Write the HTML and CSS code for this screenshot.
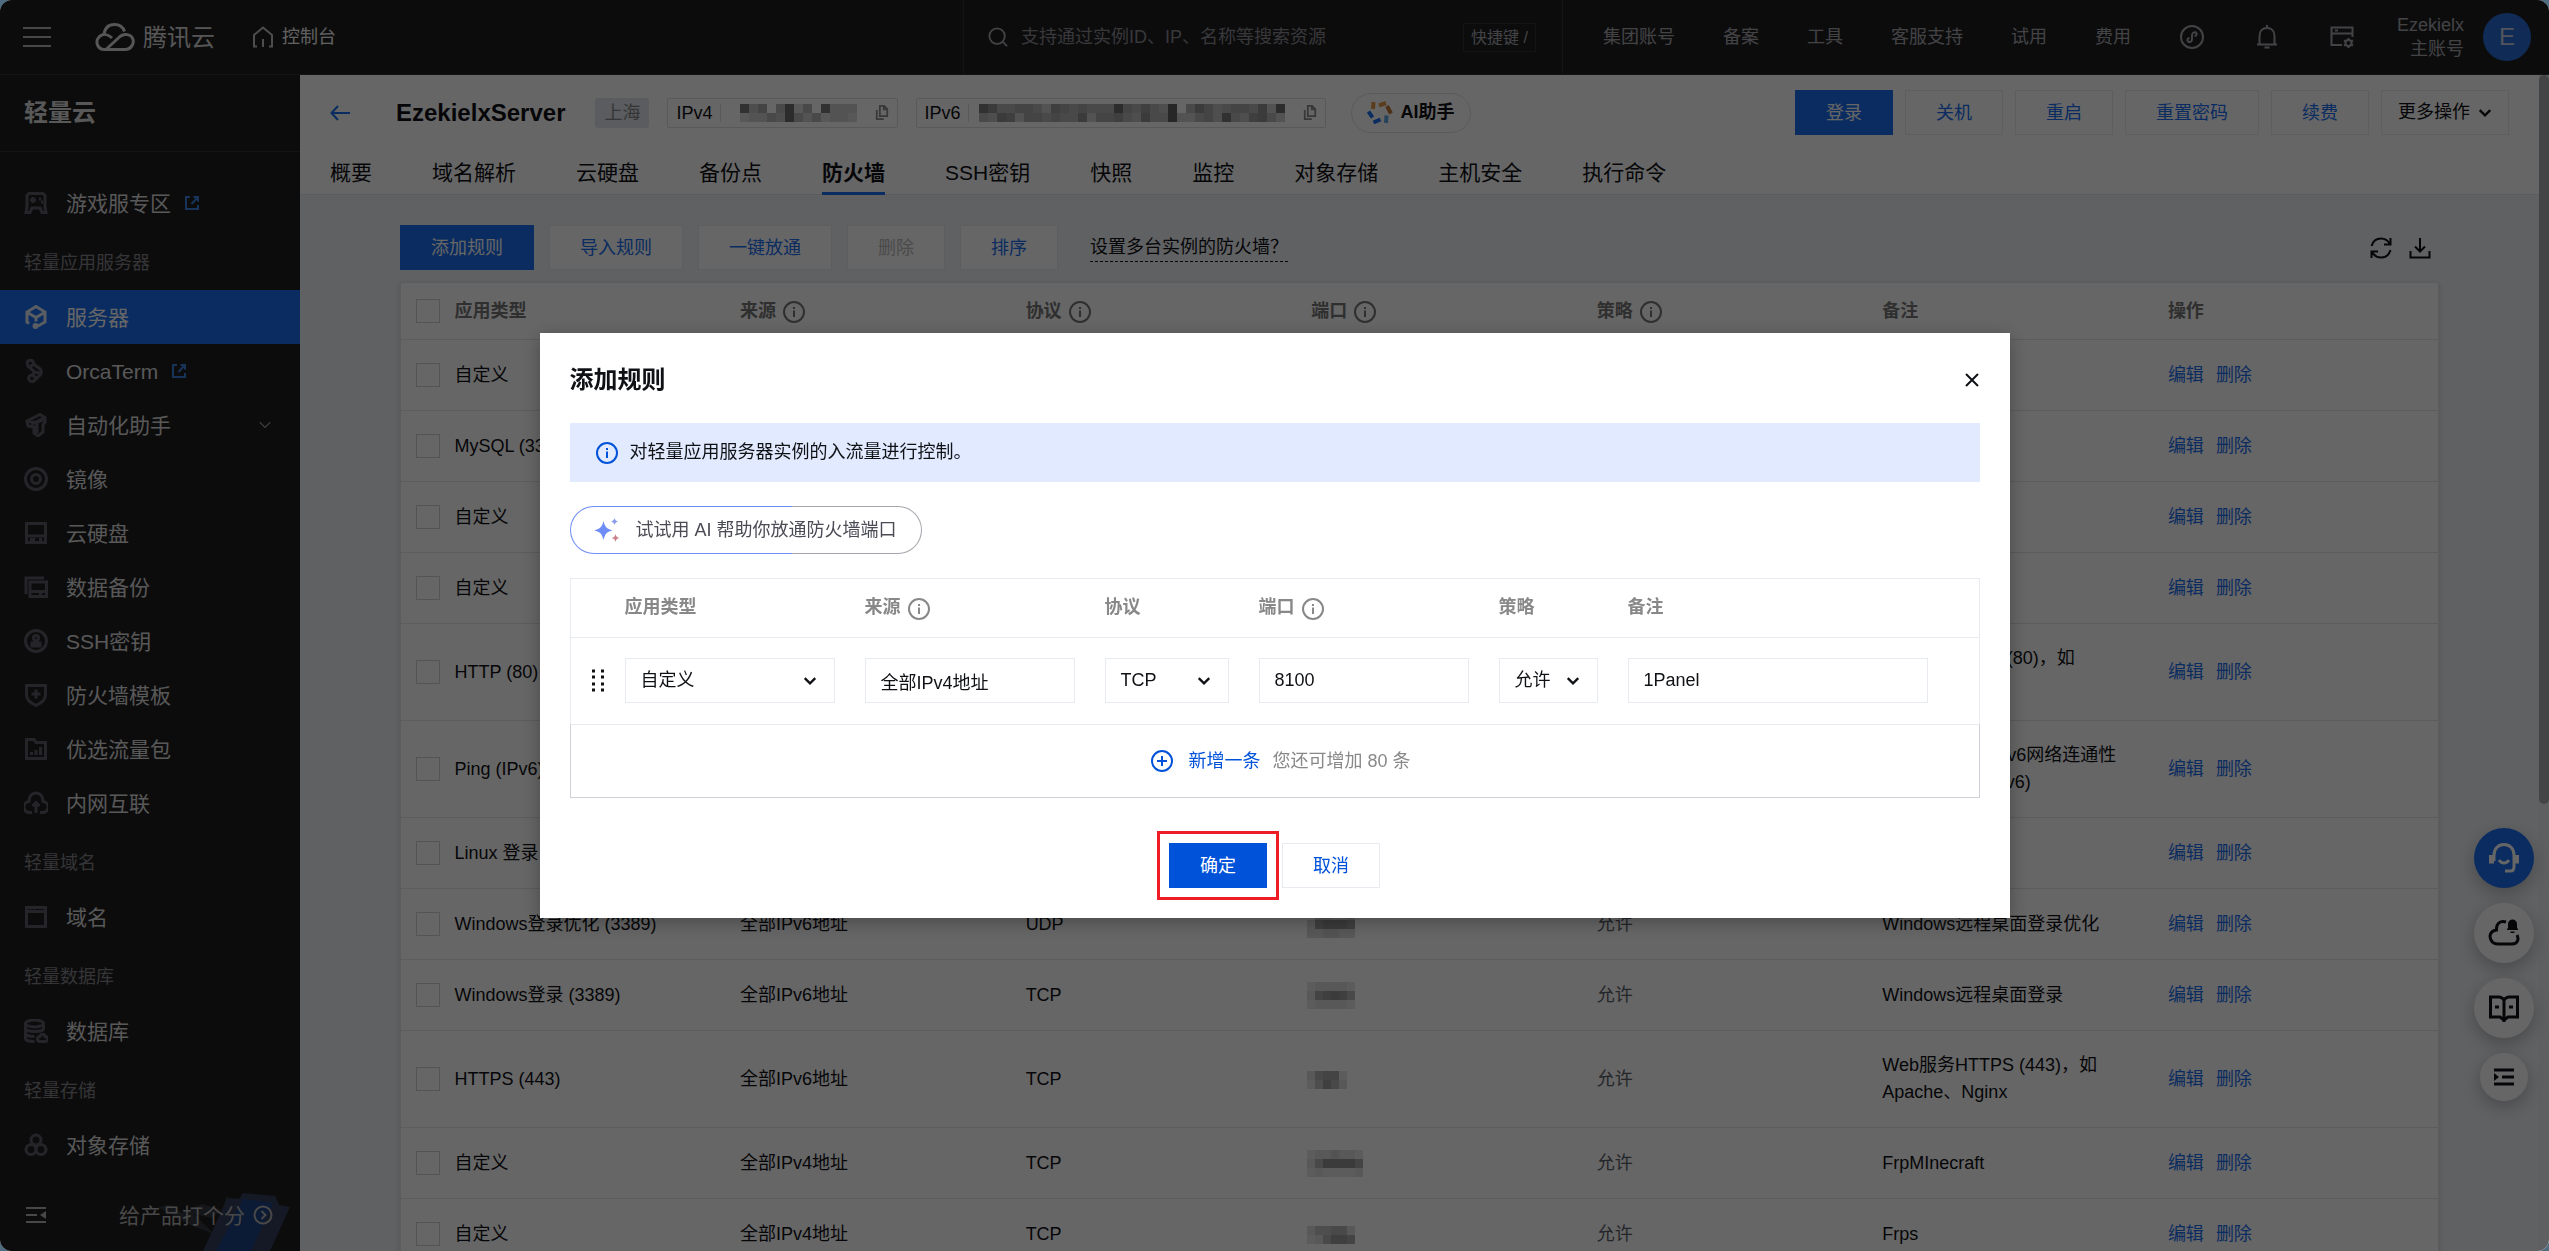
FILE: index.html
```html
<!DOCTYPE html>
<html lang="zh-CN">
<head>
    <meta charset="UTF-8">
    <meta name="viewport" content="width=device-width, initial-scale=1.0">
    <title>EzekielxServer - 轻量云 - 控制台</title>
    <link rel="stylesheet" href="styles.css">
</head>
<body>
<svg class="sprite" aria-hidden="true">
    <symbol id="info" viewBox="0 0 24 24"><circle cx="12" cy="12" r="10"/><path d="M12 10.500v6.500M12 7v2"/></symbol>
    <symbol id="chevron" viewBox="0 0 12 12"><path d="M1.500 3.500 6 8l4.500-4.500"/></symbol>
    <symbol id="copy" viewBox="0 0 16 18"><path d="M5.500 1.500h5l3.500 3.500v8H5.500zM10 1.500V5.500h4M2 6v10.500h8"/></symbol>
    <symbol id="external" viewBox="0 0 16 16"><path d="M6 2H2v12h12v-4M9.500 2H14v4.500M14 2 7.500 9"/></symbol>
</svg>
<div class="app">
    <header class="topbar">
        <button class="menu-btn" aria-label="菜单"><svg viewBox="0 0 28 22"><path d="M0 2h28M0 11h28M0 20h28"/></svg></button>
        <a class="logo" href="#">
            <svg viewBox="0 0 40 30"><path d="M9 12.500C10 5 14 2.500 19.500 2.500c4.500 0 8.500 2.500 10 7M17 16c-4-4-9-4.500-12.500-1.500-5 5-2 13 5 13H30c7 0 9-7 8-10-1.500-5.500-9-6.500-13-3L11.500 27"/></svg>
            腾讯云
        </a>
        <a class="console" href="#">
            <svg viewBox="0 0 22 22"><path d="M5 20.500H2V9l9-7.500L20 9v11.500h-3M11 13v8"/></svg>
            控制台
        </a>
        <div class="search">
            <svg viewBox="0 0 22 22"><circle cx="10" cy="10" r="8.500"/><path d="m16 16 5 5"/></svg>
            <input type="text" aria-label="搜索" placeholder="支持通过实例ID、IP、名称等搜索资源">
            <kbd>快捷键 /</kbd>
        </div>
        <nav class="topnav">
            <a href="#">集团账号</a>
            <a href="#">备案</a>
            <a href="#">工具</a>
            <a href="#">客服支持</a>
            <a href="#">试用</a>
            <a href="#">费用</a>
        </nav>
        <div class="tools">
            <button aria-label="小程序"><svg viewBox="0 0 24 24"><circle cx="12" cy="12" r="11"/><path d="M8 16.500c3 1.500 4-.5 4-3v-3c0-2.500 2-4 4-3 1.500 1 .5 3.500-1.500 3.500M8 16.500c-1.500-1.500 0-3.500 1.500-3.500"/></svg></button>
            <button aria-label="消息"><svg viewBox="0 0 24 24"><path d="M12 0v3M2 19.500h20M4.500 19V11C4.500 6 7.500 3 12 3s7.500 3 7.500 8v8M9.500 22.500h5"/></svg></button>
            <button aria-label="设置"><svg viewBox="0 0 24 24"><path d="M12 20H1.500V2.500h21V12M1.500 8.500h21M5 5.500h3"/><circle cx="18.500" cy="18" r="3"/><path d="M18.500 13v2M18.500 21v2M14 15.500l2 1M21 19.500l2 1M14 20.500l2-1M21 16.500l2-1"/></svg></button>
        </div>
        <div class="account">
            <div>Ezekielx<br>主账号</div>
            <span class="avatar">E</span>
        </div>
    </header>

    <aside class="sidebar">
        <h2>轻量云</h2>
        <nav class="menu">
            <a href="#"><svg viewBox="0 0 24 24"><path d="M5 2.500h14l2 2V16l1 5.500h-4L16 17H8l-2 4.500H2L3 16V4.500zM9 6v6M6 9h6M15 8h2M17 11h2"/></svg>游戏服专区<svg class="ext"><use href="#external"/></svg></a>
            <h3>轻量应用服务器</h3>
            <a class="active" href="#"><svg viewBox="0 0 24 24"><path d="M5 18.500 3 17V7l9-5.500L21 7v10l-7 4M3.500 7.500 12 12.500l8.500-5M12 12.500v4"/><circle cx="11.500" cy="21" r="1.500"/></svg>服务器</a>
            <a href="#"><svg viewBox="0 0 24 24"><path d="M5 1.500c3-1 5 1 4.500 3.500l6 4.500c2.500 2 2.500 5 0 7l-5 5c-3 2.500-7-.5-5.500-3.500.5-1.500 2-2 3.500-2l2-3-5-4.500c-3-2-3-6-.5-7zM10.500 13l5 1M8.500 16l4 3M9.500 5 5.500 8.500"/></svg>OrcaTerm<svg class="ext"><use href="#external"/></svg></a>
            <a href="#"><svg viewBox="0 0 24 24"><path d="M3 8 16 1.500l5 3V9l-2 3v7l-5 4-4-3v-6l-6-1zM3 8l8 1.500 10-5M13 10v10M7 11l12-4"/></svg>自动化助手<svg class="arrow"><use href="#chevron"/></svg></a>
            <a href="#"><svg viewBox="0 0 24 24"><circle cx="12" cy="12" r="10.500"/><circle cx="12" cy="12" r="4.500"/></svg>镜像</a>
            <a href="#"><svg viewBox="0 0 24 24"><path d="M2.500 2.500h19v19h-19zM2.500 15h19M6 18.500h5M15 18.500h3"/></svg>云硬盘</a>
            <a href="#"><svg viewBox="0 0 24 24"><path d="M2 19V3h18M6 7h16.500v14.500H6zM6 16.500h16M15 19h3"/></svg>数据备份</a>
            <a href="#"><svg viewBox="0 0 24 24"><circle cx="12" cy="12" r="10.500"/><circle cx="12" cy="9" r="2.500"/><path d="M11 11v3H8v3h8v-3h-3v-3"/></svg>SSH密钥</a>
            <a href="#"><svg viewBox="0 0 24 24"><path d="M2.500 2.500h19V12c0 5-4 8-9.500 10.500C6.500 20 2.500 17 2.500 12zM12 6.500v9M7.500 11h9"/></svg>防火墙模板</a>
            <a href="#"><svg viewBox="0 0 24 24"><path d="M2.500 2.500H10l2 3h9.500v16h-19zM7.500 18v-3M12 18v-5M16.500 18v-8"/></svg>优选流量包</a>
            <a href="#"><svg viewBox="0 0 24 24"><path d="M8 21.500H6a5.500 5.500 0 0 1-1-11C5 5 8 2 12 2s7 3 7 8.500a5.500 5.500 0 0 1-1 11h-2M12 12v10M8.500 15 12 11.500l3.500 3.500"/></svg>内网互联</a>
            <h3>轻量域名</h3>
            <a href="#"><svg viewBox="0 0 24 24"><path d="M2.500 2.500h19v19h-19zM2.500 6.500h19M6 4.500h1M10 4.500h1"/></svg>域名</a>
            <h3>轻量数据库</h3>
            <a href="#"><svg viewBox="0 0 24 24"><ellipse cx="10.500" cy="4.500" rx="9" ry="3.500"/><path d="M1.500 4.500v5c0 4 18 4 18 0v-5M1.500 9.500v5c0 2 4 3 9 3M1.500 14.500v5c0 2 4 3 9 3M16 22.500a2.500 2.500 0 0 1 0-5c.5-3 4.500-3 5 0a2.500 2.500 0 0 1 0 5z"/></svg>数据库</a>
            <h3>轻量存储</h3>
            <a href="#"><svg viewBox="0 0 24 24"><circle cx="12" cy="7" r="5"/><circle cx="7" cy="16.500" r="5"/><circle cx="17" cy="16.500" r="5"/></svg>对象存储</a>
        </nav>
        <div class="rate">
            <svg class="cards" viewBox="0 0 180 60" aria-hidden="true">
                <path fill="#34373f" d="m30 16 12-2 12 8 20-9 20 6-10 8-18-4 20 20-22-8zM98 6l12 2-24 52H84z"/>
                <path fill="#34405c" d="M99 8h12l4-6 32 3 4 9 11 2-20 44H75z"/>
                <path fill="#1e4484" d="m115 8 30 4-22 48H88z"/>
            </svg>
            <button aria-label="收起"><svg viewBox="0 0 20 18"><path d="M0 2h20M0 9h11M0 16h20"/><path class="solid" d="M20 5v8l-6-4z"/></svg></button>
            <a href="#">给产品打个分<svg viewBox="0 0 20 20"><circle cx="10" cy="10" r="8.500"/><path d="m8.500 6 4 4-4 4"/></svg></a>
        </div>
    </aside>

    <main class="main">
        <section class="head">
            <div class="head-row">
                <a class="back" href="#" aria-label="返回"><svg viewBox="0 0 20 16"><path d="M20 8H2M8 1 1.500 8 8 15"/></svg></a>
                <h1>EzekielxServer</h1>
                <span class="tag">上海</span>
                <span class="ip"><b>IPv4</b><i class="mask" data-cells="14a8193c914bbb/1cbb9a39b9cbbc"></i><svg><use href="#copy"/></svg></span>
                <span class="ip"><b>IPv6</b><i class="mask" data-cells="4699889b789899938979a21968a98896b3/9a67b8898996b8879a6992bb98a49a769b"></i><svg><use href="#copy"/></svg></span>
                <button class="ai-btn">
                    <svg viewBox="0 0 26 24"><path stroke="#e59a45" d="M6.500 1 6 8M12 4.500 19 2"/><path stroke="#c07c38" d="m20 5 4 7.500"/><path stroke="#196ef0" d="m1.500 10.500 4 6M6.500 21.500l7-3"/><path stroke="#5fa8ea" d="M19.500 14.500 19 22"/></svg>
                    AI助手
                </button>
                <div class="actions">
                    <button class="btn primary">登录</button>
                    <button class="btn">关机</button>
                    <button class="btn">重启</button>
                    <button class="btn">重置密码</button>
                    <button class="btn">续费</button>
                    <button class="btn more">更多操作<svg><use href="#chevron"/></svg></button>
                </div>
            </div>
            <nav class="tabs">
                <a href="#">概要</a>
                <a href="#">域名解析</a>
                <a href="#">云硬盘</a>
                <a href="#">备份点</a>
                <a class="on" href="#">防火墙</a>
                <a href="#">SSH密钥</a>
                <a href="#">快照</a>
                <a href="#">监控</a>
                <a href="#">对象存储</a>
                <a href="#">主机安全</a>
                <a href="#">执行命令</a>
            </nav>
        </section>

        <section class="content">
            <div class="toolbar">
                <button class="btn primary">添加规则</button>
                <button class="btn">导入规则</button>
                <button class="btn">一键放通</button>
                <button class="btn" disabled>删除</button>
                <button class="btn">排序</button>
                <a class="hint" href="#">设置多台实例的防火墙？</a>
                <div class="icons">
                    <button aria-label="刷新"><svg viewBox="0 0 24 24"><path d="M2.500 10C4 5 8 2.500 12 2.500c4 0 7 2 9 5.500M21.500 2v6.500H15M21.500 14c-1.500 5-5.500 7.500-9.500 7.500-4 0-7-2-9-5.500M2.500 22v-6.500H9"/></svg></button>
                    <button aria-label="下载"><svg viewBox="0 0 24 24"><path d="M12 2v13M7 10.500l5 5 5-5M2.500 15v6.500h19V15"/></svg></button>
                </div>
            </div>
            <table class="rules">
                <thead>
                    <tr>
                        <th class="check"><input type="checkbox" aria-label="全选"></th>
                        <th>应用类型</th>
                        <th>来源<svg><use href="#info"/></svg></th>
                        <th>协议<svg><use href="#info"/></svg></th>
                        <th>端口<svg><use href="#info"/></svg></th>
                        <th>策略<svg><use href="#info"/></svg></th>
                        <th>备注</th>
                        <th>操作</th>
                    </tr>
                </thead>
                <tbody>
                    <tr><td class="check"><input type="checkbox" aria-label="选择"></td><td>自定义</td><td></td><td></td><td></td><td></td><td></td><td><a href="#">编辑</a><a href="#">删除</a></td></tr>
                    <tr><td class="check"><input type="checkbox" aria-label="选择"></td><td>MySQL (3306)</td><td></td><td></td><td></td><td></td><td></td><td><a href="#">编辑</a><a href="#">删除</a></td></tr>
                    <tr><td class="check"><input type="checkbox" aria-label="选择"></td><td>自定义</td><td></td><td></td><td></td><td></td><td></td><td><a href="#">编辑</a><a href="#">删除</a></td></tr>
                    <tr><td class="check"><input type="checkbox" aria-label="选择"></td><td>自定义</td><td></td><td></td><td></td><td></td><td></td><td><a href="#">编辑</a><a href="#">删除</a></td></tr>
                    <tr><td class="check"><input type="checkbox" aria-label="选择"></td><td>HTTP (80)</td><td></td><td></td><td></td><td></td><td>Web服务HTTP (80)，如<br>Apache、Nginx</td><td><a href="#">编辑</a><a href="#">删除</a></td></tr>
                    <tr><td class="check"><input type="checkbox" aria-label="选择"></td><td>Ping (IPv6)</td><td></td><td></td><td></td><td></td><td>通过Ping测试IPv6网络连通性<br>(放通ALL ICMPv6)</td><td><a href="#">编辑</a><a href="#">删除</a></td></tr>
                    <tr><td class="check"><input type="checkbox" aria-label="选择"></td><td>Linux 登录 (22)</td><td></td><td></td><td></td><td></td><td></td><td><a href="#">编辑</a><a href="#">删除</a></td></tr>
                    <tr><td class="check"><input type="checkbox" aria-label="选择"></td><td>Windows登录优化 (3389)</td><td>全部IPv6地址</td><td>UDP</td><td><i class="mask" data-cells="0bbccb/c76667/ccbbcc"></i></td><td class="allow">允许</td><td>Windows远程桌面登录优化</td><td><a href="#">编辑</a><a href="#">删除</a></td></tr>
                    <tr><td class="check"><input type="checkbox" aria-label="选择"></td><td>Windows登录 (3389)</td><td>全部IPv6地址</td><td>TCP</td><td><i class="mask" data-cells="dccccd/c87679/dccccd"></i></td><td class="allow">允许</td><td>Windows远程桌面登录</td><td><a href="#">编辑</a><a href="#">删除</a></td></tr>
                    <tr><td class="check"><input type="checkbox" aria-label="选择"></td><td>HTTPS (443)</td><td>全部IPv6地址</td><td>TCP</td><td><i class="mask" data-cells="c988d0/da79c0"></i></td><td class="allow">允许</td><td>Web服务HTTPS (443)，如<br>Apache、Nginx</td><td><a href="#">编辑</a><a href="#">删除</a></td></tr>
                    <tr><td class="check"><input type="checkbox" aria-label="选择"></td><td>自定义</td><td>全部IPv4地址</td><td>TCP</td><td><i class="mask" data-cells="dccbccd/c966668/dcddddc"></i></td><td class="allow">允许</td><td>FrpMInecraft</td><td><a href="#">编辑</a><a href="#">删除</a></td></tr>
                    <tr><td class="check"><input type="checkbox" aria-label="选择"></td><td>自定义</td><td>全部IPv4地址</td><td>TCP</td><td><i class="mask" data-cells="caa99c/dc9778"></i></td><td class="allow">允许</td><td>Frps</td><td><a href="#">编辑</a><a href="#">删除</a></td></tr>
                </tbody>
            </table>
        </section>
    </main>
    <div class="scrollbar"><span></span></div>

    <div class="floats">
        <button class="support" aria-label="客服"><svg viewBox="0 0 32 32"><path d="M6 19v-6C6 7 10 2.500 16 2.500S26 7 26 13v12c0 2.500-1 4-3.500 4H17"/><path class="thick" d="M3.500 13v8.500M28.500 13v8.500"/><path d="M11 18c2.500 4 7.500 4 10 0"/></svg></button>
        <button aria-label="通知"><svg viewBox="0 0 32 32"><path d="M18 5c-6-2-10 2-9.500 8C2 14 1 19 3 23c1.500 3 4 4 7 4h14c6 0 7-5 5-9"/><path class="solid" d="M19 13h11v-1l-1-1V7c0-6-9-6-9 0v4l-1 1zM22.500 14.500h4v1.500h-4z"/></svg></button>
        <button aria-label="文档"><svg viewBox="0 0 32 32"><path d="M16 8c-1.500-2-3-3-5-3H2.500v20H12l4 3 4-3h9.500V5H21c-2 0-3.500 1-5 3zM16 8v22M7 15h4M21 15h4"/></svg></button>
        <button class="small" aria-label="展开"><svg viewBox="0 0 20 20"><path d="M0 3h20M8 10h12M0 17h20"/><path class="solid" d="M0 6v8l5-4z"/></svg></button>
    </div>
</div>

<div class="overlay">
    <div class="dialog" role="dialog" aria-labelledby="dialog-title">
        <div class="dialog-head">
            <h2 id="dialog-title">添加规则</h2>
            <button class="close" aria-label="关闭"><svg viewBox="0 0 16 16"><path d="m2 2 12 12M14 2 2 14"/></svg></button>
        </div>
        <p class="alert"><svg><use href="#info"/></svg>对轻量应用服务器实例的入流量进行控制。</p>
        <button class="ai-pill">
            <svg viewBox="0 0 26 26"><path fill="#6f8df6" d="M9.500 4c1.500 6 3 7.500 9 9.500-6 1.500-7.500 3.500-9 9.500-1.500-6-3-8-9.500-9.500C6.500 11.500 8 10 9.500 4z"/><path fill="#8a9cf0" d="M20.500 1c.5 2 1.500 3 3.500 3.500-2 .5-3 1.500-3.500 3.500-.5-2-1.500-3-3.500-3.500C19 4 20 3 20.500 1z"/><path fill="#c9818c" d="M21.500 17c.5 2.500 1.500 3.500 4 4-2.500.5-3.500 1.500-4 4-.5-2.500-1.500-3.500-4-4 2.500-.5 3.500-1.500 4-4z"/></svg>
            试试用 AI 帮助你放通防火墙端口
        </button>
        <div class="form-table">
            <table>
                <colgroup><col class="c-drag"><col class="c-wide"><col class="c-wide"><col class="c-proto"><col class="c-wide"><col class="c-policy"><col></colgroup>
                <thead>
                    <tr>
                        <th></th>
                        <th><label for="type">应用类型</label></th>
                        <th><label for="source">来源</label><svg><use href="#info"/></svg></th>
                        <th><label for="proto">协议</label></th>
                        <th><label for="port">端口</label><svg><use href="#info"/></svg></th>
                        <th><label for="policy">策略</label></th>
                        <th><label for="remark">备注</label></th>
                    </tr>
                </thead>
                <tbody>
                    <tr>
                        <td class="drag"><svg viewBox="0 0 14 24"><path d="M1 2h3M10 2h3M1 8h3M10 8h3M1 15h3M10 15h3M1 21h3M10 21h3"/></svg></td>
                        <td><div class="select"><select id="type"><option>自定义</option></select><svg><use href="#chevron"/></svg></div></td>
                        <td><input type="text" id="source" value="全部IPv4地址"></td>
                        <td><div class="select"><select id="proto"><option>TCP</option></select><svg><use href="#chevron"/></svg></div></td>
                        <td><input type="text" id="port" value="8100"></td>
                        <td><div class="select"><select id="policy"><option>允许</option></select><svg><use href="#chevron"/></svg></div></td>
                        <td class="remark"><input type="text" id="remark" value="1Panel"></td>
                    </tr>
                </tbody>
            </table>
        </div>
        <div class="add-row">
            <button><svg viewBox="0 0 24 24"><circle cx="12" cy="12" r="10"/><path d="M12 7v10M7 12h10"/></svg>新增一条</button>
            <span>您还可增加 80 条</span>
        </div>
        <div class="dialog-foot">
            <button class="btn primary confirm">确定</button>
            <button class="btn">取消</button>
        </div>
    </div>
</div>
<script src="script.js"></script>
</body>
</html>
```
FILE: styles.css
```css
* {
    box-sizing: border-box;
}
body {
    margin: 0;
    height: 100vh;
    overflow: hidden;
    background: #4f6d80;
    font-family: "Liberation Sans", "Noto Sans CJK SC", sans-serif;
    font-size: 18px;
    line-height: 27px;
    color: #0f1115;
}
a {
    color: inherit;
    text-decoration: none;
}
h1, h2, h3, p {
    margin: 0;
}
button, input, select {
    font: inherit;
    color: inherit;
}
button {
    padding: 0;
    border: none;
    background: none;
}
svg {
    fill: none;
    stroke: currentColor;
    stroke-width: 2;
    flex: none;
}
.solid {
    fill: currentColor;
    stroke: none;
}
.sprite {
    position: absolute;
    width: 0;
    height: 0;
}
.app {
    display: grid;
    grid-template-columns: 300px 1fr 10px;
    grid-template-rows: 75px 1fr;
    height: 100vh;
    border-radius: 12px;
    overflow: hidden;
    background: #f1f3f7;
}

/* top bar */
.topbar {
    grid-column: 1 / -1;
    display: flex;
    align-items: center;
    background: #202022;
    border-bottom: 1px solid #343436;
    color: #a8a8b0;
}
.menu-btn {
    margin-left: 23px;
    color: #b4b4b4;
}
.menu-btn svg {
    display: block;
    width: 28px;
    height: 22px;
}
.logo {
    display: flex;
    align-items: center;
    gap: 8px;
    margin-left: 44px;
    font-size: 24px;
    color: #d8d8d8;
}
.logo svg {
    width: 40px;
    height: 30px;
    stroke-width: 3;
}
.console {
    display: flex;
    align-items: center;
    gap: 8px;
    margin-left: 37px;
    color: #f0f0f0;
}
.console svg {
    width: 22px;
    height: 22px;
    color: #c0c0c0;
}
.search {
    display: flex;
    align-items: center;
    width: 600px;
    height: 74px;
    margin-left: auto;
    padding: 0 26px 0 24px;
    border: 1px solid #343436;
    border-width: 0 1px;
}
.search svg {
    width: 20px;
    height: 22px;
}
.search input {
    flex: 1;
    min-width: 0;
    margin-left: 13px;
    padding: 0;
    border: none;
    outline: none;
    background: none;
}
.search input::placeholder {
    color: #8c8c92;
}
.search kbd {
    padding: 0 7px;
    border: 1px solid #343436;
    font: inherit;
    font-size: 16px;
}
.topnav {
    display: flex;
    gap: 48px;
    margin-left: 40px;
}
.tools {
    display: flex;
    gap: 51px;
    margin-left: 49px;
}
.tools svg {
    display: block;
    width: 24px;
    height: 24px;
}
.account {
    display: flex;
    align-items: center;
    gap: 19px;
    margin: 0 18px 0 25px;
    padding-left: 18px;
    line-height: 24px;
    text-align: right;
}
.avatar {
    width: 48px;
    border-radius: 50%;
    background: #2a6fd6;
    color: #c8d4e8;
    font-size: 24px;
    line-height: 48px;
    text-align: center;
}

/* side menu */
.sidebar {
    display: flex;
    flex-direction: column;
    min-height: 0;
    background: #202022;
    color: #dcdcdc;
}
.sidebar h2 {
    padding-left: 24px;
    border-bottom: 1px solid #343436;
    font-size: 24px;
    line-height: 76px;
}
.menu {
    padding-top: 24px;
}
.menu a {
    display: flex;
    align-items: center;
    height: 54px;
    padding: 0 28px 0 24px;
    font-size: 21px;
}
.menu svg {
    width: 24px;
    height: 24px;
    margin-right: 18px;
    color: #5c5d68;
    stroke-width: 3;
}
.menu .active {
    background: #196ef0;
    color: #fff;
}
.menu .active svg {
    color: #e0e8f4;
}
.menu .ext {
    width: 16px;
    height: 16px;
    margin: 0 0 0 13px;
    color: #3c82e0;
    stroke-width: 2;
}
.menu .arrow {
    width: 14px;
    height: 14px;
    margin: 0 0 0 auto;
    color: #a0a0a0;
    stroke-width: 1;
}
.menu h3 {
    height: 60px;
    padding: 6px 0 0 24px;
    color: #84848a;
    font-size: 18px;
    font-weight: normal;
    line-height: 54px;
}
.rate {
    position: relative;
    display: flex;
    align-items: center;
    justify-content: space-between;
    height: 72px;
    margin-top: auto;
    padding: 0 27px 0 26px;
    font-size: 21px;
    color: #b4b4b4;
}
.rate button svg {
    display: block;
    width: 20px;
    height: 18px;
}
.rate a {
    position: relative;
    display: flex;
    align-items: center;
    gap: 8px;
}
.rate a svg {
    width: 20px;
    height: 20px;
}
.rate .cards {
    position: absolute;
    right: -8px;
    bottom: 0;
    width: 180px;
    stroke: none;
}

/* instance header */
.main {
    min-width: 0;
    min-height: 0;
    overflow: hidden;
}
.head {
    height: 120px;
    padding: 0 30px;
    border-bottom: 1px solid #e4e6ec;
    background: #fff;
}
.head-row {
    display: flex;
    align-items: center;
    height: 75px;
    white-space: nowrap;
}
.back svg {
    display: block;
    width: 20px;
    height: 16px;
    color: #196ef0;
}
.head h1 {
    margin: 0 30px 0 46px;
    font-size: 24px;
}
.tag {
    padding: 2px 9px 1px;
    border-radius: 3px;
    background: #e1e6ee;
    color: #888;
}
.ip {
    display: flex;
    align-items: center;
    height: 30px;
    margin-left: 18px;
    padding: 0 8px;
    border: 1px solid #dcdee4;
    border-radius: 2px;
}
.ip b {
    padding-right: 7px;
    border-right: 1px solid #dcdee4;
    font-weight: normal;
    line-height: 18px;
}
.ip .mask {
    margin: 0 18px 0 10px;
}
.ip svg {
    width: 14px;
    height: 17px;
    color: #8c8c90;
}
.mask {
    display: inline-grid;
    grid-auto-rows: 9px;
    vertical-align: middle;
}
.rules .mask {
    margin-left: -4px;
}
.ai-btn {
    display: flex;
    align-items: center;
    gap: 8px;
    height: 40px;
    margin-left: 25px;
    padding: 0 15px;
    border: 1px solid #e0e2e8;
    border-radius: 20px;
    font-weight: bold;
}
.ai-btn svg {
    width: 26px;
    height: 24px;
    stroke-width: 4;
}
.actions {
    display: flex;
    gap: 12px;
    margin-left: auto;
}
.btn {
    height: 45px;
    padding: 1px 30px 0;
    border: 1px solid #e7eaef;
    background: #fff;
    color: #196ef0;
    white-space: nowrap;
}
.btn.primary {
    border-color: #196ef0;
    background: #196ef0;
    color: #fff;
}
.btn:disabled {
    color: #bbb;
}
.btn.more {
    display: flex;
    align-items: center;
    gap: 8px;
    padding: 0 16px;
    color: #0f1115;
}
.btn.more svg {
    width: 14px;
    height: 14px;
}
.tabs {
    display: flex;
    gap: 60px;
    font-size: 21px;
}
.tabs a {
    height: 45px;
    line-height: 45px;
}
.tabs .on {
    border-bottom: 3px solid #196ef0;
    font-weight: bold;
}

/* firewall rules */
.content {
    padding: 30px 100px 0;
}
.toolbar {
    display: flex;
    align-items: center;
    gap: 15px;
    margin-bottom: 12px;
}
.hint {
    margin-left: 17px;
    border-bottom: 1px dashed #0f1115;
}
.icons {
    display: flex;
    gap: 15px;
    margin: 0 7px 0 auto;
}
.icons svg {
    display: block;
    width: 24px;
    height: 24px;
}
.rules {
    width: 100%;
    table-layout: fixed;
    border-collapse: collapse;
    border: 1px solid #e4e6ec;
    background: #fff;
    box-shadow: 0 2px 6px rgba(54, 58, 80, .2);
}
.rules th, .rules td {
    height: 71px;
    padding: 21px 15px;
    border-bottom: 1px solid #e4e6ec;
    text-align: left;
}
.rules th {
    height: 57px;
    padding: 0 15px;
    color: #777;
}
.rules .check {
    width: 39px;
    padding: 0 0 0 15px;
}
.check input {
    display: block;
    appearance: none;
    width: 24px;
    height: 24px;
    margin: 0;
    border: 1px solid #cfd1d6;
    background: #fff;
}
th svg {
    width: 24px;
    height: 24px;
    margin-left: 6px;
    vertical-align: middle;
}
.rules td a {
    margin-right: 12px;
    color: #196ef0;
}
.rules .allow {
    color: #5a606a;
}

.scrollbar {
    background: #eceef0;
}
.scrollbar span {
    display: block;
    height: 62%;
    border-radius: 5px;
    background: #a8aaac;
}
.floats {
    position: fixed;
    right: 15px;
    bottom: 150px;
    display: flex;
    flex-direction: column;
    align-items: center;
    gap: 15px;
}
.floats button {
    display: flex;
    align-items: center;
    justify-content: center;
    width: 60px;
    height: 60px;
    border-radius: 50%;
    background: #fff;
    box-shadow: 0 6px 18px rgba(0, 0, 0, .25);
}
.floats svg {
    width: 32px;
    height: 32px;
    stroke-width: 3;
}
.floats .thick {
    stroke-width: 5;
}
.floats .support {
    background: #196ef0;
    color: #fff;
}
.floats .small {
    width: 48px;
    height: 48px;
}
.floats .small svg {
    width: 20px;
    height: 20px;
}

/* add rule dialog */
.overlay {
    position: fixed;
    inset: 0;
    display: flex;
    align-items: center;
    justify-content: center;
    border-radius: 12px;
    background: rgba(0, 0, 0, .6);
}
.dialog {
    width: 1470px;
    max-width: 100%;
    padding: 30px;
    background: #fff;
    box-shadow: 0 4px 18px rgba(0, 0, 0, .3);
}
.dialog-head {
    display: flex;
    align-items: center;
    justify-content: space-between;
    height: 33px;
    margin-bottom: 27px;
}
.dialog-head h2 {
    font-size: 24px;
}
.close svg {
    display: block;
    width: 16px;
    height: 16px;
}
.alert {
    display: flex;
    align-items: center;
    gap: 11px;
    height: 59px;
    padding: 0 25px;
    background: #e1eafe;
}
.alert svg {
    width: 24px;
    height: 24px;
    color: #0052d9;
}
.ai-pill {
    display: flex;
    align-items: center;
    gap: 16px;
    height: 48px;
    margin: 24px 0;
    padding: 0 24px 0 23px;
    border: 1px solid transparent;
    border-radius: 24px;
    background: linear-gradient(#fff, #fff) padding-box, linear-gradient(to right, #6f8df6 63%, #a8a6ad 63%) border-box;
    color: #4b4b55;
}
.ai-pill svg {
    width: 26px;
    height: 26px;
    stroke: none;
}
.form-table {
    border: 1px solid #e7eaef;
    border-bottom: none;
}
.form-table table {
    width: 100%;
    table-layout: fixed;
    border-collapse: collapse;
}
.form-table th {
    height: 58px;
    padding: 0 15px;
    border-bottom: 1px solid #e7eaef;
    color: #888;
    text-align: left;
}
.form-table td {
    height: 87px;
    padding: 0 15px;
}
.form-table .drag {
    padding: 0 0 0 20px;
}
.c-drag {
    width: 39px;
}
.c-wide {
    width: 240px;
}
.c-proto {
    width: 154px;
}
.c-policy {
    width: 129px;
}
.drag svg {
    display: block;
    width: 14px;
    height: 24px;
    stroke-width: 3;
}
.form-table .remark {
    padding-right: 51px;
}
.form-table input, .form-table select {
    display: block;
    appearance: none;
    width: 100%;
    height: 45px;
    padding: 0 15px;
    border: 1px solid #e7eaef;
    border-radius: 0;
    background: #fff;
}
.select {
    position: relative;
}
.select svg {
    position: absolute;
    top: 16px;
    right: 18px;
    width: 14px;
    height: 14px;
    pointer-events: none;
}
.add-row {
    display: flex;
    align-items: center;
    justify-content: center;
    gap: 12px;
    height: 74px;
    padding-left: 12px;
    border: 1px solid #cfd0d8;
    border-top-color: #e7eaef;
    color: #888;
}
.add-row button {
    display: flex;
    align-items: center;
    gap: 14px;
    color: #0052d9;
}
.add-row svg {
    width: 24px;
    height: 24px;
}
.dialog-foot {
    display: flex;
    justify-content: center;
    gap: 15px;
    margin-top: 45px;
}
.dialog-foot .btn {
    color: #0052d9;
}
.dialog-foot .confirm {
    z-index: 1;
    border-color: #0052d9;
    background: #0052d9;
    color: #fff;
    outline: 3px solid #ee1c25;
    outline-offset: 9px;
}
```
FILE: script.js
```js
// hidden values: each hex digit is one grey cell, "0" is empty, "/" starts a new row
document.querySelectorAll('.mask').forEach(function (mask) {
    var rows = mask.dataset.cells.split('/');
    var inIp = mask.parentNode.classList.contains('ip');
    mask.style.gridTemplateColumns = 'repeat(' + rows[0].length + ', ' + (inIp ? 9 : 8) + 'px)';
    rows.join('').split('').forEach(function (digit) {
        var cell = document.createElement('span');
        var level = parseInt(digit, 16);
        if (level > 1) {
            var v = 75 + level * 12;
            cell.style.background = 'rgb(' + v + ',' + v + ',' + v + ')';
        }
        mask.appendChild(cell);
    });
});
```
